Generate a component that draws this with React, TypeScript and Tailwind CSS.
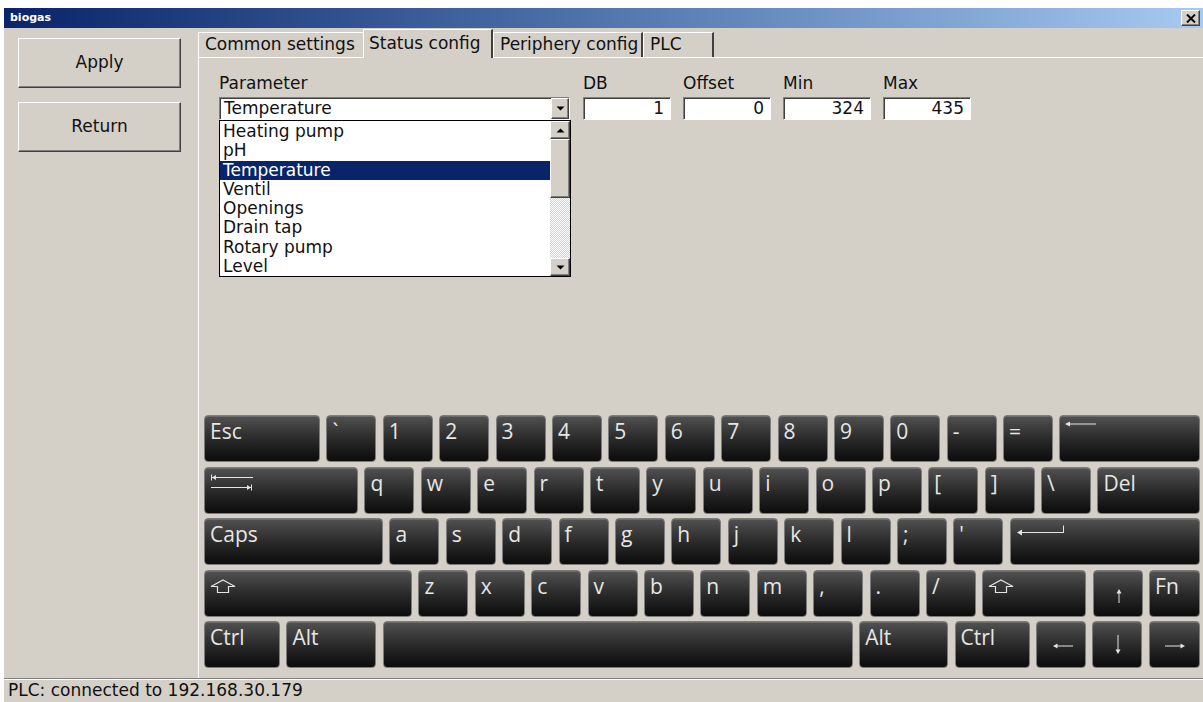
import React from "react";

type KeyDef = {
  label?: string;
  icon?: "back" | "tab" | "enter" | "shift" | "up" | "down" | "left" | "right";
  w?: string;
  grow?: boolean;
};

const k = (label: string): KeyDef => ({ label, w: "w-[50px]" });

const rows: KeyDef[][] = [
  [
    { label: "Esc", w: "w-[116px]" },
    ...["`", "1", "2", "3", "4", "5", "6", "7", "8", "9", "0", "-", "="].map(k),
    { icon: "back", grow: true },
  ],
  [
    { icon: "tab", w: "w-[154px]" },
    ...["q", "w", "e", "r", "t", "y", "u", "i", "o", "p", "[", "]", "\\"].map(k),
    { label: "Del", grow: true },
  ],
  [
    { label: "Caps", w: "w-[179px]" },
    ...["a", "s", "d", "f", "g", "h", "j", "k", "l", ";", "'"].map(k),
    { icon: "enter", grow: true },
  ],
  [
    { icon: "shift", w: "w-[208px]" },
    ...["z", "x", "c", "v", "b", "n", "m", ",", ".", "/"].map(k),
    { icon: "shift", w: "w-[104px]" },
    { icon: "up", w: "w-[50px]" },
    { label: "Fn", grow: true },
  ],
  [
    { label: "Ctrl", w: "w-[76px]" },
    { label: "Alt", w: "w-[90px]" },
    { w: "w-[470px]" },
    { label: "Alt", w: "w-[89px]" },
    { label: "Ctrl", w: "w-[75px]" },
    { icon: "left", w: "w-[50px]" },
    { icon: "down", w: "w-[50px]" },
    { icon: "right", grow: true },
  ],
];

const params = ["Heating pump", "pH", "Temperature", "Ventil", "Openings", "Drain tap", "Rotary pump", "Level"];

const fields = [
  { name: "DB", value: "1" },
  { name: "Offset", value: "0" },
  { name: "Min", value: "324" },
  { name: "Max", value: "435" },
];

// the tab left of the active one has its right edge covered by it
const tabs = [
  { name: "Common settings", cls: "w-[165px] border-r-0" },
  { name: "Status config", cls: "w-[130px] border-r-2", active: true },
  { name: "Periphery config", cls: "w-[150px] border-r-2" },
  { name: "PLC", cls: "w-[71px] border-r-2" },
];

const raised =
  "border border-t-white border-l-white border-r-[#404040] border-b-[#404040] shadow-[inset_-1px_-1px_#808080]";
const sunken =
  "border border-t-[#808080] border-l-[#808080] border-r-white border-b-white shadow-[inset_1px_1px_#404040]";

const fg = "#e4e4e4";

function KeyIcon({ icon }: { icon: NonNullable<KeyDef["icon"]> }) {
  switch (icon) {
    case "back":
      return (
        <svg className="absolute left-[4px] top-[4px]" width="36" height="8">
          <path d="M4 4H32" stroke={fg} strokeWidth="1" />
          <path d="M1 4l5-2.5v5z" fill={fg} />
        </svg>
      );
    case "tab":
      return (
        <svg className="absolute left-[5px] top-[6px]" width="46" height="17">
          <path d="M1.5 0.5v6M1.5 3.5H43" stroke={fg} strokeWidth="1" />
          <path d="M2 3.5l4-2.5v5z" fill={fg} />
          <path d="M1 13.5H41M41.5 10.5v6" stroke={fg} strokeWidth="1" />
          <path d="M41 13.5l-4-2.5v5z" fill={fg} />
        </svg>
      );
    case "enter":
      return (
        <svg className="absolute left-[5px] top-[5px]" width="50" height="12">
          <path d="M4 8.5H48M47.5 1.5V9" stroke={fg} strokeWidth="1" />
          <path d="M1 8.5l5-3v6z" fill={fg} />
        </svg>
      );
    case "shift":
      return (
        <svg className="absolute left-[5px] top-[8px]" width="26" height="15">
          <path d="M13 1L25 7.5H18.5V13.5H7.5V7.5H1Z" stroke={fg} strokeWidth="1.2" fill="none" strokeLinejoin="miter" />
        </svg>
      );
    case "up":
      return (
        <svg className="absolute left-[20px] top-[17px]" width="10" height="16">
          <path d="M5 4V15" stroke={fg} strokeWidth="1" />
          <path d="M5 1l-2.5 4.5h5z" fill={fg} />
        </svg>
      );
    case "down":
      return (
        <svg className="absolute left-[20px] top-[12px]" width="10" height="21">
          <path d="M5 1V17" stroke={fg} strokeWidth="1" />
          <path d="M5 20l-2.5-4.5h5z" fill={fg} />
        </svg>
      );
    case "left":
      return (
        <svg className="absolute left-[15px] top-[19px]" width="22" height="10">
          <path d="M4 5H21" stroke={fg} strokeWidth="1" />
          <path d="M1 5l4.5-2.5v5z" fill={fg} />
        </svg>
      );
    case "right":
      return (
        <svg className="absolute left-[14px] top-[19px]" width="22" height="10">
          <path d="M1 5H18" stroke={fg} strokeWidth="1" />
          <path d="M21 5l-4.5-2.5v5z" fill={fg} />
        </svg>
      );
  }
}

function Key({ def }: { def: KeyDef }) {
  return (
    <div
      className={`relative h-[47px] shrink-0 rounded-[4px] border border-[#7c7c7c] bg-linear-to-b from-[#525252] via-[#2b2b2b] to-[#0c0c0c] shadow-[inset_0_1px_0_#6c6c6c] ${
        def.grow ? "flex-1" : def.w ?? ""
      }`}
    >
      {def.label && (
        <span className="absolute left-[5px] top-[5px] font-['Open_Sans',sans-serif] text-[21px] leading-[21px] text-[#e6e6e6]">
          {def.label}
        </span>
      )}
      {def.icon && <KeyIcon icon={def.icon} />}
    </div>
  );
}

function Keyboard() {
  return (
    <div className="mt-auto flex flex-col gap-[4.5px] pl-[5px] pr-[3px] pb-[10px]">
      {rows.map((row, i) => (
        <div key={i} className="flex gap-[6.4px]">
          {row.map((def, j) => (
            <Key key={j} def={def} />
          ))}
        </div>
      ))}
    </div>
  );
}

function Triangle({ down }: { down?: boolean }) {
  return (
    <svg width="9" height="5">
      <path d={down ? "M0.5 0.5h8l-4 4z" : "M0.5 4.5h8l-4-4z"} fill="#000" />
    </svg>
  );
}

function ParameterCombo() {
  return (
    <div className="relative w-[351px]">
      <div className={`flex h-[23px] bg-white ${sunken}`}>
        <div className="flex-1 pl-[4px] leading-[21px]">Temperature</div>
        <div className={`flex w-[18px] items-center justify-center bg-[#d4d0c8] ${raised}`}>
          <Triangle down />
        </div>
      </div>
      {/* open dropdown list */}
      <div className="absolute left-0 top-[23px] z-10 flex h-[157px] w-[352px] border border-black bg-white">
        <div className="flex-1 pt-[1px]">
          {params.map((p) => (
            <div
              key={p}
              className={`h-[19.25px] pl-[3px] leading-[19px] ${p === "Temperature" ? "bg-[#0a246a] text-white" : ""}`}
            >
              {p}
            </div>
          ))}
        </div>
        <div className="flex w-[20px] flex-col">
          <div className={`flex h-[18px] items-center justify-center bg-[#d4d0c8] ${raised}`}>
            <Triangle />
          </div>
          <div className={`h-[59px] bg-[#d4d0c8] ${raised}`} />
          <div className="flex-1 bg-[repeating-conic-gradient(#d4d0c8_0_25%,#ffffff_0_50%)] bg-size-[2px_2px]" />
          <div className={`flex h-[18px] items-center justify-center bg-[#d4d0c8] ${raised}`}>
            <Triangle down />
          </div>
        </div>
      </div>
    </div>
  );
}

function StatusConfig() {
  return (
    <div className="flex pl-[20px] pt-[16px]">
      <div className="w-[364px]">
        <div className="h-[19px] leading-[19px]">Parameter</div>
        <div className="mt-[4px]">
          <ParameterCombo />
        </div>
      </div>
      {fields.map((f) => (
        <div key={f.name} className="w-[100px]">
          <div className="h-[19px] leading-[19px]">{f.name}</div>
          <div className={`mt-[4px] h-[23px] w-[88px] bg-white pr-[6px] text-right leading-[21px] ${sunken}`}>
            {f.value}
          </div>
        </div>
      ))}
    </div>
  );
}

export default function App() {
  return (
    <div className="flex h-[702px] w-[1203px] flex-col overflow-hidden bg-white pl-[4px] pt-[8px] font-['DejaVu_Sans',Verdana,sans-serif] text-[17px] text-[#111]">
      {/* caption */}
      <div className="flex h-[20px] shrink-0 items-center bg-linear-to-r from-[#0a246a] to-[#a6caf0] pl-[6px] pr-[3px]">
        <span className="text-[11px] font-bold text-white">biogas</span>
        <div className={`ml-auto flex h-[16px] w-[19px] items-center justify-center bg-[#d4d0c8] ${raised}`}>
          <svg width="10" height="9">
            <path d="M1 0.5l8 8M9 0.5l-8 8" stroke="#000" strokeWidth="2" />
          </svg>
        </div>
      </div>

      <div className="flex flex-1 flex-col bg-[#d4d0c8]">
        <div className="flex h-[650px]">
          {/* side actions */}
          <div className="flex w-[194px] shrink-0 flex-col gap-[14px] pl-[14px] pt-[10px]">
            <button className={`h-[50px] w-[163px] bg-[#d4d0c8] ${raised}`}>Apply</button>
            <button className={`h-[50px] w-[163px] bg-[#d4d0c8] ${raised}`}>Return</button>
          </div>

          {/* tab widget */}
          <div className="flex flex-1 flex-col">
            <div className="flex h-[29px] items-end">
              {tabs.map((t) =>
                t.active ? (
                  <div
                    key={t.name}
                    className={`relative z-10 -mb-px h-[29px] ${t.cls} border-l border-t border-l-white border-r-[#404040] border-t-white bg-[#d4d0c8] pl-[5px] pt-[3px] leading-[20px] whitespace-nowrap`}
                  >
                    {t.name}
                  </div>
                ) : (
                  <div
                    key={t.name}
                    className={`h-[25px] ${t.cls} border-l border-t border-l-white border-r-[#404040] border-t-white pl-[6px] pt-[1px] leading-[20px] whitespace-nowrap`}
                  >
                    {t.name}
                  </div>
                )
              )}
            </div>
            <div className="flex flex-1 flex-col border-l border-t border-l-white border-t-white">
              <StatusConfig />
              <Keyboard />
            </div>
          </div>
        </div>

        {/* status bar */}
        <div className="flex-1 border-t border-t-[#808080] pl-[4px] leading-[22px] shadow-[inset_0_1px_#ffffff]">
          PLC: connected to 192.168.30.179
        </div>
      </div>
    </div>
  );
}
